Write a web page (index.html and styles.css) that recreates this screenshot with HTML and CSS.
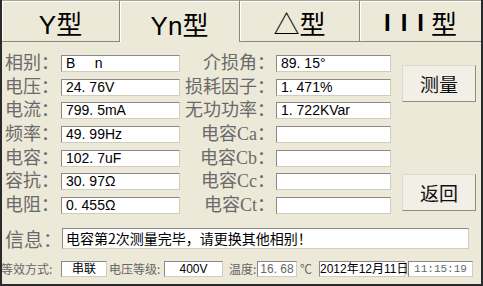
FILE: index.html
```html
<!DOCTYPE html>
<html>
<head>
    <title>介损测量</title>
    <link rel="stylesheet" href="styles.css">
</head>
<body>
    <div class="device">
        <!-- Wiring type tabs -->
        <div class="tabs">
            <div class="tab">Y型</div>
            <div class="tab active">Yn型</div>
            <div class="tab">△型</div>
            <div class="tab last"><span class="roman">III</span>型</div>
        </div>

        <div class="panel">
            <div class="readings">
                <span class="label">相别：</span>
                <div class="field">B&nbsp;&nbsp;&nbsp;&nbsp;&nbsp;n</div>
                <span class="label right">介损角：</span>
                <div class="field">89. 15°</div>

                <span class="label">电压：</span>
                <div class="field">24. 76V</div>
                <span class="label right">损耗因子：</span>
                <div class="field">1. 471%</div>

                <span class="label">电流：</span>
                <div class="field">799. 5mA</div>
                <span class="label right">无功功率：</span>
                <div class="field">1. 722KVar</div>

                <span class="label">频率：</span>
                <div class="field">49. 99Hz</div>
                <span class="label right">电容Ca：</span>
                <div class="field"></div>

                <span class="label">电容：</span>
                <div class="field">102. 7uF</div>
                <span class="label right">电容Cb：</span>
                <div class="field"></div>

                <span class="label">容抗：</span>
                <div class="field">30. 97Ω</div>
                <span class="label right">电容Cc：</span>
                <div class="field"></div>

                <span class="label">电阻：</span>
                <div class="field">0. 455Ω</div>
                <span class="label right">电容Ct：</span>
                <div class="field"></div>
            </div>
            <div class="actions">
                <button class="btn">测量</button>
                <button class="btn">返回</button>
            </div>
        </div>

        <div class="info">
            <span class="info-label">信息：</span>
            <div class="field info-text">电容第2次测量完毕，请更换其他相别！</div>
        </div>

        <!-- Status bar -->
        <div class="status">
            <span class="s-label mode-label">等效方式:</span>
            <div class="s-box mode-box">串联</div>
            <span class="s-label volt-label">电压等级:</span>
            <div class="s-box volt-box">400V</div>
            <span class="s-label temp-label">温度:</span>
            <div class="s-box temp-box gray">16. 68</div>
            <span class="s-label unit">℃</span>
            <div class="s-box date-box">2012年12月11日</div>
            <div class="s-box time-box gray">11:15:19</div>
        </div>
    </div>
</body>
</html>
```

FILE: styles.css
```css
body {
    margin: 0;
    background-color: #ece9d8;
    font-family: "Liberation Sans", "Noto Sans CJK SC", sans-serif;
}

.device {
    box-sizing: border-box;
    width: 483px;
    height: 286px;
    background-color: #ece9d8;
    border-left: 2px solid #2a2a2a;
    border-right: 2px solid #2a2a2a;
    border-bottom: 2px solid #2a2a2a;
    overflow: hidden;
}

/* Tabs */
.tabs {
    display: grid;
    grid-template-columns: 118px 120px 120px 1fr;
    height: 42px;
}

.tab {
    box-sizing: border-box;
    display: flex;
    align-items: center;
    justify-content: center;
    padding-top: 3px;
    font-size: 26px;
    color: #000;
    border-top: 1px solid #a8a596;
    border-right: 1px solid #8a877a;
    border-bottom: 1px solid #8a877a;
    box-shadow: inset 1px 1px 0 #fff;
    white-space: nowrap;
}

.tab.active {
    border-bottom: none;
}

.tab.last {
    border-right: none;
}

.roman {
    letter-spacing: 10px;
    margin-right: -3px;
    font-weight: bold;
    font-size: 24px;
}

/* Readings */
.panel {
    display: flex;
    margin-top: 13px;
}

.readings {
    display: grid;
    grid-template-columns: 59px 119px 96px 115px;
    grid-auto-rows: 17px;
    row-gap: 6.67px;
}

.label {
    padding-left: 3px;
    font-family: "Liberation Serif", "Noto Sans CJK SC", serif;
    font-size: 18px;
    line-height: 17px;
    color: #6a6a6a;
    white-space: nowrap;
}

.label.right {
    text-align: right;
    padding-right: 1px;
    padding-left: 0;
}

.field {
    box-sizing: border-box;
    height: 17px;
    padding-left: 4px;
    background-color: #fff;
    border: 1px solid;
    border-color: #8a8a8a #d0cdbf #d0cdbf #8a8a8a;
    font-size: 14px;
    line-height: 15px;
    color: #000;
    white-space: nowrap;
    overflow: hidden;
}

.actions {
    display: flex;
    flex-direction: column;
    justify-content: space-between;
    margin-left: 11px;
    padding: 10px 0 3px;
}

.btn {
    width: 74px;
    height: 37px;
    background-color: #f1efe6;
    border: 1px solid;
    border-color: #dcd9cc #8f8c80 #8f8c80 #dcd9cc;
    font-family: "Noto Sans CJK SC", sans-serif;
    font-size: 19px;
    color: #111;
    padding: 0;
}

/* Message line */
.info {
    display: flex;
    align-items: center;
    margin-top: 14px;
}

.info-label {
    box-sizing: border-box;
    width: 60px;
    padding-left: 3px;
    font-family: "Noto Sans CJK SC", sans-serif;
    font-size: 19px;
    line-height: 21px;
    color: #6a6a6a;
    white-space: nowrap;
}

.info-text {
    width: 407px;
    height: 21px;
    font-family: "Noto Sans CJK SC", sans-serif;
    font-size: 14px;
    line-height: 19px;
    padding-left: 3px;
}

/* Status bar */
.status {
    display: flex;
    align-items: center;
    margin-top: 12px;
    height: 16px;
}

.s-label {
    box-sizing: border-box;
    font-family: "Noto Sans CJK SC", sans-serif;
    font-size: 12px;
    line-height: 16px;
    color: #666;
    white-space: nowrap;
}

.s-box {
    box-sizing: border-box;
    height: 16px;
    background-color: #fff;
    border: 1px solid;
    border-color: #8a8a8a #d0cdbf #d0cdbf #8a8a8a;
    font-family: "Liberation Sans", "Noto Sans CJK SC", sans-serif;
    font-size: 12px;
    line-height: 14px;
    text-align: center;
    color: #000;
    white-space: nowrap;
}

.s-box.gray {
    color: #666;
}

.mode-label { width: 60px; margin-left: -1px; }
.mode-box { width: 46px; }
.volt-label { width: 55px; margin-left: 2px; }
.volt-box { width: 59px; }
.temp-label { width: 28px; margin-left: 6px; }
.temp-box { width: 40px; }
.unit { width: 22px; padding-left: 3px; }
.date-box { width: 86px; }
.time-box { width: 65px; margin-left: 3px; font-family: "Liberation Mono", monospace; font-size: 11px; }
```
